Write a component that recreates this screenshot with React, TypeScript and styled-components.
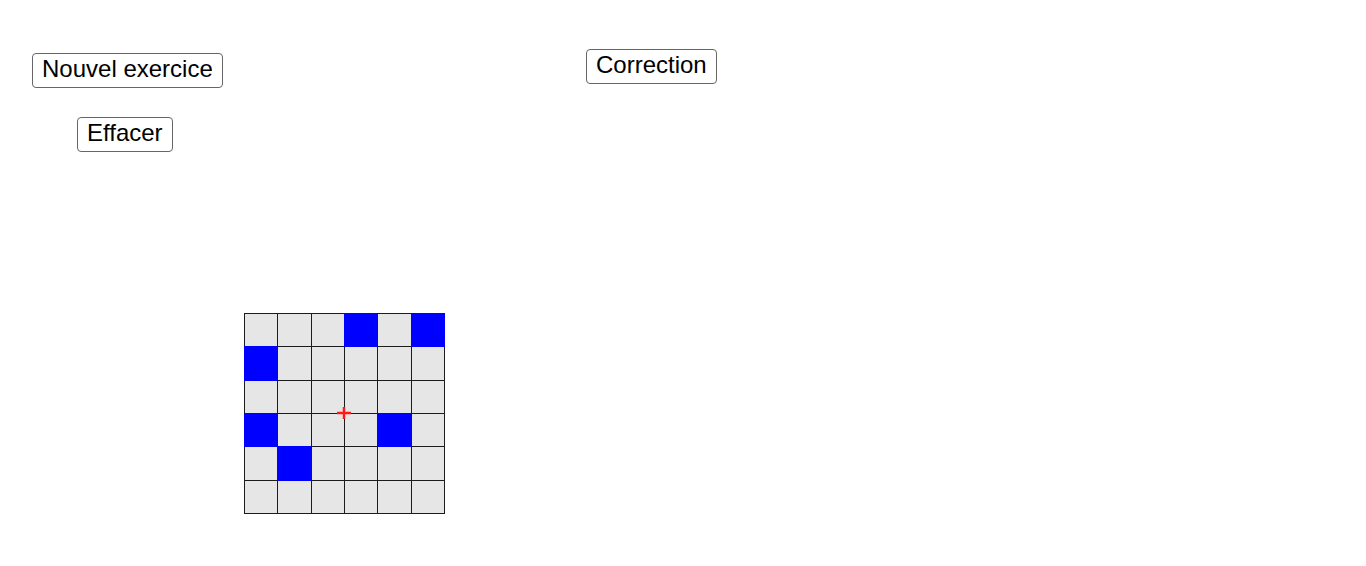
import React from "react";
import styled, { createGlobalStyle } from "styled-components";

const Global = createGlobalStyle`
  html, body {
    margin: 0;
    padding: 0;
    background: #ffffff;
  }
  body {
    font-family: "Liberation Sans", Arial, sans-serif;
  }
`;

// graphics view of the applet: objects sit where the author dropped them
const Canvas = styled.div`
  position: relative;
  width: 1366px;
  height: 566px;
  overflow: hidden;
  background: #fff;
`;

const Button = styled.button<{ $x: number; $y: number }>`
  position: absolute;
  left: ${(p) => p.$x}px;
  top: ${(p) => p.$y}px;
  height: 35px;
  box-sizing: border-box;
  padding: 0 9px 3px;
  border: 1px solid #666;
  border-radius: 4px;
  background: #fff;
  color: #000;
  font-family: "Liberation Sans", Arial, sans-serif;
  font-size: 24px;
  line-height: 28px;
  cursor: pointer;
`;

const Board = styled.div`
  position: absolute;
  left: 244px;
  top: 313px;
  width: 201px;
  height: 201px;
  box-sizing: border-box;
  padding: 1px;
  background: #1c1c1c;
  display: grid;
  grid-template-columns: repeat(6, 1fr);
  grid-template-rows: repeat(6, 1fr);
  gap: 1px;
`;

const Cell = styled.div<{ $on: boolean }>`
  background: ${(p) => (p.$on ? "#0000ff" : "#e6e6e6")};
  box-shadow: ${(p) => (p.$on ? "0 0 0 1px #0000ff" : "none")};
`;

const Cross = styled.svg`
  position: absolute;
  left: 93px;
  top: 94px;
  width: 14px;
  height: 12px;
  overflow: visible;
`;

const filled = ["0-3", "0-5", "1-0", "3-0", "3-4", "4-1"];

export default function App() {
  const cells = [];
  for (let r = 0; r < 6; r++) {
    for (let c = 0; c < 6; c++) {
      const k = `${r}-${c}`;
      cells.push(<Cell key={k} $on={filled.includes(k)} />);
    }
  }
  return (
    <>
      <Global />
      <Canvas>
        <Button $x={32} $y={53}>Nouvel exercice</Button>
        <Button $x={77} $y={117}>Effacer</Button>
        <Button $x={586} $y={49}>Correction</Button>
        <Board>
          {cells}
          <Cross viewBox="0 0 14 12">
            <line x1="0" y1="6" x2="14" y2="6" stroke="#ff1a1a" strokeWidth="2.5" />
            <line x1="7" y1="0" x2="7" y2="12" stroke="#ff1a1a" strokeWidth="2.5" />
          </Cross>
        </Board>
      </Canvas>
    </>
  );
}
